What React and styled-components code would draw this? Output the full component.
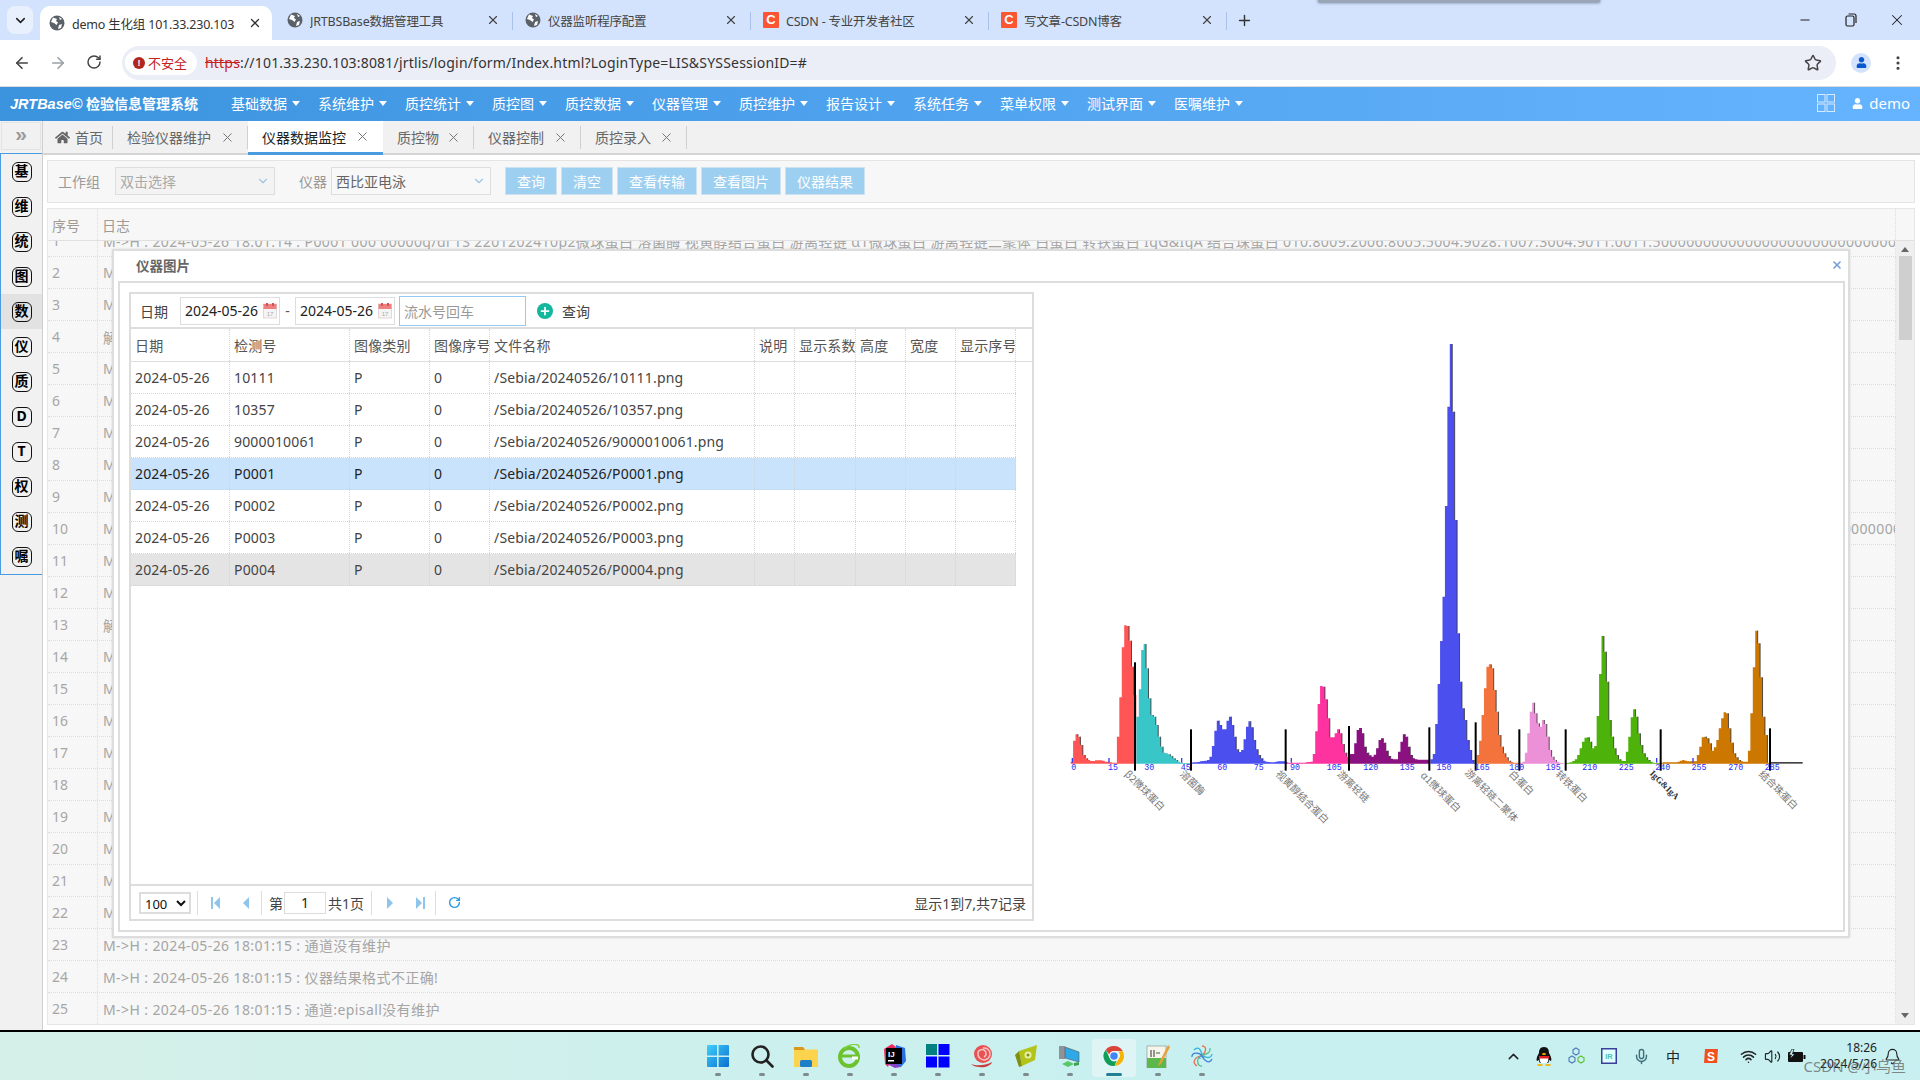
import React from "react";
import styled, { createGlobalStyle } from "styled-components";
import { ArrowLeft, ArrowRight, RotateCw, Star, X, Plus, Minus, ChevronDown, ChevronUp, Mic, Volume2, Wifi, Bell, MoreVertical } from "lucide-react";
import { FaHome, FaUser } from "react-icons/fa";

const Global = createGlobalStyle`
  html, body { margin: 0; padding: 0; background: #fff; }
  * { box-sizing: border-box; }
  body { font-family: "Noto Sans", "Noto Sans CJK SC", sans-serif; font-size: 14px; }
`;

const Page = styled.div`
  width: 1920px; height: 1080px; overflow: hidden; display: flex; flex-direction: column; position: relative;
  font-family: "Noto Sans", "Noto Sans CJK SC", sans-serif;
`;

/* ---------- browser chrome ---------- */
const TabStrip = styled.div`
  height: 40px; background: #d3e3fd; display: flex; align-items: flex-end; padding-left: 7px; position: relative; flex: none;
`;
const TabSearch = styled.div`
  width: 26px; height: 28px; margin: 0 7px 6px 0; border-radius: 8px; background: #e8f0fe; display: flex; align-items: center; justify-content: center; color: #222;
`;
const ActiveTab = styled.div`
  width: 232px; height: 34px; background: #fff; border-radius: 10px 10px 0 0; display: flex; align-items: center; padding: 0 10px 0 9px; margin-right: 3px; color: #333; position: relative;
`;
const BrowserTab = styled.div`
  width: 238px; height: 34px; display: flex; align-items: center; padding: 0 13px 6px 12px; color: #444; position: relative;
  &::after { content: ""; position: absolute; right: 0; top: 6px; height: 18px; width: 1px; background: #a9c2ea; }
`;
const TabTitle = styled.span`
  flex: 1; font-size: 12.5px; margin-left: 7px; white-space: nowrap; overflow: hidden; letter-spacing: -0.2px;
`;
const CsdnMark = styled.span`
  width: 16px; height: 16px; background: #fc5531; color: #fff; font: 700 13px/16px "Liberation Sans", sans-serif; text-align: center; flex: none; border-radius: 1px;
`;
const NewTab = styled.div`
  width: 34px; height: 28px; margin-bottom: 6px; display: flex; align-items: center; justify-content: center; color: #333;
`;
const WindowButtons = styled.div`
  margin-left: auto; display: flex; height: 40px; align-items: center; color: #222;
`;
const WindowButton = styled.div`
  width: 46px; display: flex; justify-content: center; align-items: center;
`;
const TopShade = styled.div`
  position: absolute; left: 1318px; top: -4px; width: 282px; height: 6px; background: #9aa5b5; box-shadow: 0 1px 3px rgba(60,70,90,.6);
`;
const AddressRow = styled.div`
  height: 47px; background: #fff; display: flex; align-items: center; padding: 0 0 1px 0; border-bottom: 1px solid #dcdcdc; flex: none;
`;
const NavIcon = styled.div`
  width: 36px; display: flex; justify-content: center; color: ${p => p.$dim ? "#9aa0a6" : "#444"};
`;
const NavIcons = styled.div`
  display: flex; padding-left: 4px; width: 122px;
`;
const Omnibox = styled.div`
  width: 1714px; height: 34px; border-radius: 17px; background: #ebeef7; display: flex; align-items: center; padding: 0 14px 0 3px;
`;
const SecurityChip = styled.div`
  width: 72px; height: 25px; background: #fff; border-radius: 13px; display: flex; align-items: center; gap: 3px; padding-left: 8px; color: #c5221f; font-size: 13px; white-space: nowrap;
`;
const SecurityDot = styled.span`
  width: 12px; height: 12px; border-radius: 50%; background: #b3261e; color: #fff; display: flex; align-items: center; justify-content: center; font: 700 9px/12px "Liberation Sans", sans-serif;
`;
const Url = styled.div`
  margin-left: 8px; font-size: 14px; color: #333; white-space: nowrap; letter-spacing: 0.19px; flex: 1;
`;
const Https = styled.span`
  color: #c5221f; text-decoration: line-through;
`;
const Avatar = styled.div`
  width: 20px; height: 20px; border-radius: 50%; background: #d3e3fd; display: flex; align-items: center; justify-content: center; color: #0b57d0; margin-left: 15px;
`;
const MenuDots = styled.div`
  width: 37px; margin-left: 8px; display: flex; justify-content: center; color: #444;
`;

/* ---------- app nav ---------- */
const Nav = styled.div`
  height: 34px; flex: none; display: flex; align-items: center; padding-bottom: 2px; color: #fff; background: linear-gradient(90deg, #3b93de, #66b4ff);
`;
const Logo = styled.div`
  width: 231px; padding-left: 10px; font-weight: 700; font-size: 14px; white-space: nowrap;
  i { font-family: "Liberation Sans", sans-serif; font-size: 14.5px; }
`;
const MenuItem = styled.div`
  width: ${p => p.$w}px; display: flex; align-items: center; font-size: 14px; white-space: nowrap;
  &::after { content: ""; margin-left: 5px; border: 4.5px solid transparent; border-top: 5px solid #fff; border-bottom: 0; }
`;
const NavRight = styled.div`
  margin-left: auto; display: flex; align-items: center; padding-right: 10px; font-size: 15px;
`;
const NavGap = styled.span`
  width: 17px;
`;
const Demo = styled.span`
  margin: 0 0 0 6px;
`;

/* ---------- body ---------- */
const Body = styled.div`
  flex: 1; display: flex; min-height: 0; background: #fff;
`;
const LeftCol = styled.div`
  width: 43px; flex: none; background: #f1f1f1; border-right: 1px solid #cfcfcf; display: flex; flex-direction: column;
`;
const Collapse = styled.div`
  height: 28px; margin: 1px 1px 0; border: 1px solid #e3e3e3; color: #9a9a9a; font: 700 21px/21px "Liberation Sans", sans-serif; text-align: center;
`;
const SideMenu = styled.div`
  margin-top: 3px; border: 1px solid #4a9be0; border-right: 0; height: 422px; padding-top: 0; width: 42px;
`;
const SideItem = styled.div`
  height: 35px; display: flex; align-items: center; justify-content: center; background: ${p => p.$active ? "#e2e2e2" : "transparent"};
`;
const SideBadge = styled.span`
  width: 20px; height: 20px; border: 1.5px solid #111; border-radius: 6px; color: #000; font-size: 14px; font-weight: 700; line-height: 16px; text-align: center; display: block;
`;
const Main = styled.div`
  flex: 1; min-width: 0; display: flex; flex-direction: column; position: relative;
`;
const PageTabs = styled.div`
  height: 34px; flex: none; display: flex; background: #f1f1f1; border-bottom: 2px solid #d5d5d5; color: #666; font-size: 14px;
`;
const PageTab = styled.div`
  display: flex; align-items: center; height: 34px; padding: 0 ${p => p.$close ? "0" : "10px"} ${p => p.$active ? 0 : 2}px ${p => p.$pl || 14}px; position: relative; width: ${p => p.$w}px; flex: none;
  color: ${p => p.$active ? "#222" : "#666"}; background: ${p => p.$active ? "#fff" : "transparent"};
  border-bottom: ${p => p.$active ? "3px solid #4a9be0" : "none"};
  &::after { content: ""; display: ${p => p.$active ? "none" : "block"}; position: absolute; right: 0; top: 5px; bottom: 6px; width: 1px; background: #d0d0d0; }
`;
const TabLabel = styled.span`
  flex: 1; white-space: nowrap;
`;
const TabClose = styled.span`
  width: 32px; padding-left: 4px; display: flex; justify-content: flex-start; color: #777;
`;
const HomeGlyph = styled.span`
  color: #666; display: flex; margin-right: 5px;
`;
const Content = styled.div`
  flex: 1; min-height: 0; display: flex; flex-direction: column; gap: 5px; padding: 5px 5px 5px 4px; background: #fff;
`;
const Filter = styled.div`
  height: 43px; flex: none; background: #f7f7f7; border: 1px solid #e4e4e4; display: flex; align-items: center; padding: 0 0 2px 10px; color: #999; font-size: 14px;
`;
const FilterLabel = styled.span`
  width: ${p => p.$w}px; white-space: nowrap;
`;
const SelectBox = styled.div`
  width: 160px; height: 28px; border: 1px solid #dedede; background: ${p => p.$on ? "#f8f8f8" : "#f3f3f3"}; color: ${p => p.$on ? "#666" : "#aaa"}; display: flex; align-items: center; justify-content: space-between; padding: 0 4px; font-size: 14px; margin-right: ${p => p.$mr || 0}px;
  svg { color: #9cc3e6; }
`;
const FilterButton = styled.div`
  width: ${p => p.$w}px; height: 28px; margin-right: 4px; background: #9dcff0; border: 1px solid #cfe2ef; color: #fff; font-size: 14px; display: flex; align-items: center; justify-content: center;
`;

/* ---------- log grid ---------- */
const LogTable = styled.div`
  flex: 1; min-height: 0; border: 1px solid #e6e6e6; background: #f7f7f7; display: flex; flex-direction: column; overflow: hidden; color: #a8a6a4;
`;
const LogHead = styled.div`
  height: 32px; flex: none; display: grid; grid-template-columns: 50px 1fr 18px; align-items: stretch; border-bottom: 1px solid #e0e0e0; background: #f7f7f7; position: relative; z-index: 1;
`;
const LogHeadCell = styled.div`
  display: flex; align-items: center; padding-left: 4px; color: #a29a95; border-right: 1px dotted #ddd;
`;
const LogFrame = styled.div`
  flex: 1; min-height: 0; display: flex;
`;
const LogRows = styled.div`
  flex: 1; min-width: 0; overflow: hidden;
`;
const LogRow = styled.div`
  height: 32px; display: grid; grid-template-columns: 50px 1fr; border-bottom: 1px dotted #ddd; border-right: 1px dotted #ddd; align-items: center; font-size: 14px; white-space: nowrap;
  &:first-child { margin-top: -16px; }
`;
const LogNum = styled.div`
  padding-left: 4px; height: 100%; display: flex; align-items: center; border-right: 1px dotted #ddd; font-size: 14px; color: #a8a6a4;
`;
const LogText = styled.div`
  padding-left: 5px; overflow: hidden; text-overflow: clip; color: #a5a5a5; letter-spacing: 0.4px;
`;
const Scroll = styled.div`
  width: 18px; flex: none; background: #efefef; display: flex; flex-direction: column; align-items: center; color: #666; padding-top: 6px;
`;
const ScrollArrow = styled.div`
  width: 0; height: 0; border: 4px solid transparent;
  ${p => p.$down ? "border-top: 5px solid #666; border-bottom: 0; margin-top: auto; margin-bottom: 6px;" : "border-bottom: 5px solid #666; border-top: 0;"}
`;
const ScrollThumb = styled.div`
  width: 13px; height: 84px; margin: 4px 0 0 1px; background: #cfcfcf;
`;

/* ---------- dialog ---------- */
const Dialog = styled.div`
  position: absolute; left: 69px; top: 128px; width: 1738px; height: 689px; background: #fff; border: 2px solid #ddd; border-right-width: 2px; display: flex; flex-direction: column; z-index: 5; box-shadow: 0 0 2px rgba(0,0,0,.12);
`;
const DialogHead = styled.div`
  height: 30px; flex: none; display: flex; align-items: center; justify-content: space-between; padding: 0 5px 3px 22px; font-weight: 700; color: #666; font-size: 13.5px;
  svg { color: #7ba3d8; }
`;
const DialogBody = styled.div`
  flex: 1; min-height: 0; margin: 0 3px 4px 4px; border: 2px solid #ddd; padding: 9px 10px 9px 9px; display: flex;
`;
const DataGrid = styled.div`
  width: 905px; flex: none; border: 2px solid #ddd; display: flex; flex-direction: column; color: #444;
`;
const GridTools = styled.div`
  height: 35px; flex: none; display: flex; align-items: center; padding-left: 9px; border-bottom: 2px solid #ddd; font-size: 14px;
`;
const ToolLabel = styled.span`
  width: 40px; color: #444;
`;
const DateBox = styled.div`
  width: 100px; height: 28px; border: 1px solid #ddd; display: flex; align-items: center; justify-content: space-between; padding: 0 2px 0 4px; color: #222; font-size: 14px;
`;
const DateDash = styled.span`
  width: 15px; text-align: center; color: #555;
`;
const SerialBox = styled.div`
  width: 127px; height: 30px; margin: 0 11px 0 4px; border: 1px solid #95c9ef; color: #999; display: flex; align-items: center; padding-left: 4px; font-size: 14px;
`;
const AddDot = styled.span`
  width: 16px; height: 16px; border-radius: 50%; background: #12b79c; margin-right: 9px; color: #fff; display: flex; align-items: center; justify-content: center;
`;
const Cols = "99px 120px 80px 60px 265px 40px 61px 50px 50px 60px";
const GridHead = styled.div`
  height: 33px; flex: none; display: grid; grid-template-columns: ${Cols}; border-bottom: 1px solid #ddd; color: #555;
`;
const GridRow = styled.div`
  height: 32px; flex: none; display: grid; grid-template-columns: ${Cols}; width: 885px; border-bottom: 1px dotted #d4d4d4;
  background: ${p => p.$state === "sel" ? "#c9e3fd" : p.$state === "last" ? "#e4e4e4" : "transparent"};
  color: ${p => p.$state === "sel" ? "#222" : "#444"};
`;
const Cell = styled.div`
  display: flex; align-items: center; padding-left: 4px; border-right: 1px dotted #d4d4d4; white-space: nowrap; overflow: hidden; font-size: 14px; letter-spacing: .17px;
`;
const GridFill = styled.div`
  flex: 1;
`;
const Pager = styled.div`
  height: 35px; flex: none; border-top: 2px solid #ddd; display: flex; align-items: center; padding: 0 6px 0 8px; color: #444; font-size: 14px;
`;
const PageSize = styled.select`
  width: 52px; height: 22px; border: 2px solid #ddd; background: #fff; color: #111; font: 13px "Noto Sans", sans-serif; padding: 0;
`;
const PagerSep = styled.span`
  width: 1px; height: 24px; background: #ddd; margin: 0 ${p => p.$r || 0}px 0 ${p => p.$l || 0}px;
`;
const PagerBtn = styled.span`
  width: 30px; display: flex; justify-content: center; color: #8fc5ea;
`;
const PageInput = styled.div`
  width: 42px; height: 22px; border: 1px solid #ddd; text-align: center; line-height: 20px; margin: 0 2px 0 1px; color: #222;
`;
const PagerInfo = styled.span`
  margin-left: auto; color: #444;
`;
const ChartWrap = styled.div`
  flex: 1; min-width: 0; padding: 28px 0 0 16px;
`;
const Chart = styled.svg`
  display: block; width: 770px; height: 560px;
`;

/* ---------- taskbar ---------- */
const Taskbar = styled.div`
  height: 50px; flex: none; border-top: 2px solid #000; background: linear-gradient(90deg, #d5f0e8, #c8f0f0 60%); display: grid; grid-template-columns: 1fr auto 1fr; position: relative;
`;
const TaskIcons = styled.div`
  display: flex; align-items: center; grid-column: 2;
`;
const TaskCell = styled.div`
  width: 44px; height: 38px; margin-top: 4px; display: flex; align-items: flex-start; justify-content: center; padding-top: 5px; position: relative; border-radius: 4px;
  background: ${p => p.$active ? "#dff4f4" : "transparent"};
  &::after { content: ""; position: absolute; bottom: 1px; left: 50%; transform: translateX(-50%); width: ${p => p.$active ? 16 : 6}px; height: 3px; border-radius: 2px; background: ${p => p.$active ? "#1f7f94" : "#7d8b8b"}; }
`;
const Tray = styled.div`
  grid-column: 3; display: flex; align-items: center; justify-content: flex-end; padding-right: 16px; color: #222;
`;
const TrayCell = styled.div`
  width: ${p => p.$w || 32}px; flex: none; display: flex; justify-content: center; align-items: center;
`;
const Clock = styled.div`
  width: 67px; flex: none; text-align: right; font-size: 12px; line-height: 16px; color: #222; margin-right: 3px; white-space: nowrap;
`;
const Watermark = styled.div`
  position: absolute; right: 14px; bottom: 4px; font-size: 15px; color: rgba(90,90,90,.7); white-space: nowrap;
`;

/* ---------- icons ---------- */
const GlobeIcon = () => (
  <svg width="16" height="16" viewBox="0 0 16 16" style={{ flex: "none" }}>
    <circle cx="8" cy="8" r="7.5" fill="#5b6168" />
    <path d="M4 2.5 8 4 7 6 9 7.5 7.5 10 5 8 2 7Z M10 10l3-1-1 4-3 1Z M10 2l3 2-2 1Z" fill="#fff" />
  </svg>
);
const Calendar = () => (
  <svg width="14" height="16" viewBox="0 0 14 16">
    <rect x=".5" y="1" width="13" height="14" fill="#f4f4f4" stroke="#e3d8d8" />
    <rect x=".5" y="1" width="13" height="5" fill="#f08080" />
    <rect x="3" y="0" width="2" height="3" fill="#c55" /><rect x="9" y="0" width="2" height="3" fill="#c55" />
    <text x="7" y="13" fontSize="6" fill="#aaa" textAnchor="middle" fontFamily="Liberation Sans">17</text>
  </svg>
);
const SkipIcon = ({ dir }) => (
  <svg width="10" height="14" viewBox="0 0 10 14" fill="currentColor" style={dir === "r" ? { transform: "scaleX(-1)" } : undefined}>
    <rect x="0" y="1" width="2" height="12" /><path d="M9 1v12L3 7Z" />
  </svg>
);
const StepIcon = ({ dir }) => (
  <svg width="8" height="14" viewBox="0 0 8 14" fill="currentColor" style={dir === "r" ? { transform: "scaleX(-1)" } : undefined}>
    <path d="M7 1v12L1 7Z" />
  </svg>
);
const GridGlyph = () => (
  <svg width="18" height="18" viewBox="0 0 18 18" fill="none" stroke="#d6eaff" strokeWidth="1">
    <rect x=".5" y=".5" width="7.5" height="7.5" /><rect x="10" y=".5" width="7.5" height="7.5" />
    <rect x=".5" y="10" width="7.5" height="7.5" /><rect x="10" y="10" width="7.5" height="7.5" />
  </svg>
);

const IconWin = () => (
  <svg width="24" height="24" viewBox="0 0 24 24">
    <defs><linearGradient id="w" x1="0" y1="0" x2="1" y2="1"><stop offset="0" stopColor="#3fd0fb" /><stop offset="1" stopColor="#0a6fd0" /></linearGradient></defs>
    <path d="M1 2a1 1 0 0 1 1-1h9v10.4H1ZM12.6 1H22a1 1 0 0 1 1 1v9.400H12.600ZM1 13h10v10H2a1 1 0 0 1-1-1ZM12.600 13H23v9a1 1 0 0 1-1 1h-9.400Z" fill="url(#w)" />
  </svg>
);
const IconSearch = () => (
  <svg width="24" height="24" viewBox="0 0 24 24" fill="none" stroke="#222" strokeWidth="2.600"><circle cx="10.500" cy="10.500" r="8" /><path d="m16.500 16.500 6 6" strokeLinecap="round" /></svg>
);
const IconFolder = () => (
  <svg width="24" height="24" viewBox="0 0 24 24">
    <path d="M0 3h9l2 2.500h13V23H0Z" fill="#fbd34d" /><path d="M0 3h9l2 3H0Z" fill="#d9981b" />
    <rect x="6" y="16" width="12" height="7" rx="1.500" fill="#1e7fc9" />
  </svg>
);
const IconEdge = () => (
  <svg width="24" height="24" viewBox="0 0 24 24" fill="none">
    <circle cx="11" cy="13" r="9" stroke="#6cc32e" strokeWidth="4" />
    <path d="M4 12h15" stroke="#6cc32e" strokeWidth="3" /><path d="M20 14h-6" stroke="#fff" strokeWidth="3" />
    <path d="M6 5C12-1 22-1 21 4" stroke="#7ed33c" strokeWidth="1.500" />
  </svg>
);
const IconIdea = () => (
  <svg width="24" height="24" viewBox="0 0 24 24">
    <path d="M2 5 10 0l4 3-8 20-3-3Z" fill="#ee2a5b" /><path d="M14 1l9 3 1 13-5 6-6-2Z" fill="#2c6ee0" /><path d="M5 20l8 4 6-1-8-5Z" fill="#8b3fc6" />
    <rect x="4" y="4" width="16" height="16" fill="#000" />
    <text x="6" y="13" fontSize="8" fill="#fff" fontWeight="700" fontFamily="Liberation Sans">IJ</text>
    <rect x="6" y="16" width="6" height="1.500" fill="#fff" />
  </svg>
);
const IconTiles = () => (
  <svg width="24" height="24" viewBox="0 0 24 24">
    <rect width="11" height="11" fill="#008080" /><rect x="12.500" width="11" height="11" fill="#0000ff" /><rect y="12.500" width="11" height="11" fill="#0000ff" /><rect x="12.500" y="12.500" width="11" height="11" fill="#0000ff" />
  </svg>
);
const IconSnail = () => (
  <svg width="24" height="24" viewBox="0 0 24 24" fill="none">
    <circle cx="13" cy="10" r="9" fill="#e85252" /><path d="M1 20c5 2 14 2 21-2-1 4-8 6-13 5-3 0-6-1-8-3Z" fill="#c93c3c" />
    <path d="M13 4a6 6 0 1 1-5 6 4 4 0 1 1 6 3" stroke="#f7c3c3" strokeWidth="1.500" />
  </svg>
);
const IconGreen = () => (
  <svg width="24" height="24" viewBox="0 0 24 24">
    <path d="M5 7 23 1l-2 15-13 6Z" fill="#b4c31a" /><path d="M1 11l4-4 3 15-3 1Z" fill="#7f8f12" />
    <circle cx="14" cy="11" r="3.500" fill="#e8efa8" /><circle cx="14" cy="11" r="1.500" fill="#7f8f12" />
  </svg>
);
const IconNet = () => (
  <svg width="24" height="24" viewBox="0 0 24 24">
    <path d="M1 2h6v13H1Z" fill="#8d939a" /><path d="M7 3l14 5v10L7 14Z" fill="#2fa8e8" stroke="#555" strokeWidth=".600" />
    <path d="M4 20l6-3 6 3-6 3Z" fill="#58c96a" /><path d="M16 19l5-1v3l-5 1Z" fill="#3aa14e" />
  </svg>
);
const IconChrome = () => (
  <svg width="24" height="24" viewBox="0 0 48 48">
    <path d="M24 4a20 20 0 0 1 17.300 10H24a10 10 0 0 0-9.600 7.200L7.600 11.400A20 20 0 0 1 24 4Z" fill="#db4437" />
    <path d="M41.300 14A20 20 0 0 1 25 44l8.700-15a10 10 0 0 0-1-13.600Z" fill="#f4b400" />
    <path d="M7.600 11.400 16.300 30.500A10 10 0 0 0 29 33.500L25 44A20 20 0 0 1 7.600 11.400Z" fill="#0f9d58" />
    <circle cx="24" cy="24" r="9.500" fill="#fff" /><circle cx="24" cy="24" r="7.500" fill="#4285f4" />
  </svg>
);
const IconNote = () => (
  <svg width="24" height="24" viewBox="0 0 24 24">
    <rect x="1" y="2" width="19" height="22" fill="#f5f5ea" stroke="#888" strokeWidth=".600" /><rect x="1" y="14" width="19" height="10" fill="#5cb84a" />
    <path d="M5 6v7M8 6v7" stroke="#333" /><path d="M10 9h4" stroke="#555" />
    <path d="M22 1 13 19l-1 3 3-2 9-17Z" fill="#e8a13a" />
  </svg>
);
const IconSwirl = () => (
  <svg width="24" height="24" viewBox="0 0 24 24" fill="none" strokeWidth="1.300">
    <path d="M12 2c6 0 4 8-2 10S2 19 7 22" stroke="#e87050" /><path d="M22 10c-1 6-9 3-10 0S9 1 4 6" stroke="#38b6d8" />
    <path d="M12 22c-5 1-6-8-1-10s10-3 9-8" stroke="#4fbf8f" /><path d="M2 13c-1-5 8-5 10-1s7 9 10 3" stroke="#3b82d8" />
    <text x="9" y="15" fontSize="6" fill="#3b82d8" fontStyle="italic" fontFamily="Liberation Serif">ev</text>
  </svg>
);
const IconQQ = () => (
  <svg width="16" height="19" viewBox="0 0 16 19">
    <path d="M8 0c4 0 5 3 5 6 2 3 3 7 2 8l-2-1c0 2-1 3-1 3H4s-1-1-1-3l-2 1C0 13 1 9 3 6c0-3 1-6 5-6Z" fill="#111" />
    <path d="M4 9c2 1 6 1 8 0 1 3 0 6-1 7H5c-1-1-2-4-1-7Z" fill="#fff" /><rect x="3" y="9" width="10" height="2.500" fill="#e02020" />
    <ellipse cx="8" cy="7" rx="2" ry="1" fill="#f5b400" /><ellipse cx="4" cy="18" rx="3" ry="1" fill="#f5b400" /><ellipse cx="12" cy="18" rx="3" ry="1" fill="#f5b400" />
  </svg>
);
const IconHex = () => (
  <svg width="18" height="18" viewBox="0 0 18 18" fill="none" strokeWidth="1.100">
    <path d="M8 1l3 1.700v3.500L8 8 5 6.200V2.700Z" stroke="#4a78b8" /><path d="M4 9l3 1.700v3.500L4 16l-3-1.800v-3.500Z" stroke="#4a78b8" /><path d="M13 9l3 1.700v3.500L13 16l-3-1.800v-3.500Z" stroke="#58c030" />
  </svg>
);
const IconIR = () => (
  <svg width="16" height="16" viewBox="0 0 16 16">
    <rect x=".75" y=".75" width="14.500" height="14.500" fill="#dff" stroke="#3a3f99" strokeWidth="1.500" />
    <text x="8" y="11" fontSize="7.500" fontWeight="700" fill="#4fbfb0" textAnchor="middle" fontFamily="Liberation Sans">IR</text>
  </svg>
);
const IconSogou = () => (
  <svg width="16" height="16" viewBox="0 0 16 16">
    <path d="M2 1h13l-1 14H1Z" fill="#f0521e" /><text x="8" y="12.500" fontSize="12" fontWeight="700" fill="#fff" textAnchor="middle" fontFamily="Liberation Sans">S</text>
  </svg>
);
const IconBattery = () => (
  <svg width="20" height="14" viewBox="0 0 20 14">
    <rect x="1" y="3" width="15" height="10" rx="1" fill="#111" /><rect x="16.500" y="6" width="2" height="4" fill="#111" />
    <path d="M5 0 2 6h2.500L3 10l5-5H5.500L7 0Z" fill="#c8f0f0" stroke="#111" strokeWidth=".700" />
  </svg>
);

/* ---------- chart data: one y value per 7.3-unit bar ---------- */
const BASE = 1331;
const STEP = 7.3;
const series = [
  { c: "#ff5555", x: 62, y: [1325,1262,1243,1250,1275,1305,1315,1320,1323,1323,1321,1321,1321,1322,1325,1325,1327,1328,1328,1250,1132,982,916,918,962,1040,1125] },
  { c: "#38c6c8", x: 259, y: [1190,1108,990,972,1045,1135,1185,1190,1215,1250,1280,1298,1300,1303,1308,1315,1320,1325,1328,1329,1329,1329] },
  { c: "#4b4fee", x: 420, y: [1328,1327,1327,1326,1324,1323,1322,1320,1310,1278,1232,1202,1215,1228,1228,1202,1190,1215,1250,1288,1296,1290,1258,1220,1204,1222,1260,1288,1305,1315,1322,1325,1326,1327,1327,1325,1324,1324,1324,1325] },
  { c: "#ff33a0", x: 708, y: [1328,1328,1328,1328,1328,1328,1328,1328,1327,1326,1325,1302,1234,1152,1098,1100,1138,1195,1252,1252,1240,1228,1240,1272,1298,1310] },
  { c: "#8b1080", x: 898, y: [1302,1302,1270,1230,1224,1240,1280,1298,1306,1310,1304,1285,1260,1255,1268,1292,1308,1316,1318,1318,1295,1265,1243,1250,1280,1305,1315,1318,1319,1319,1319,1319,1319] },
  { c: "#4b4fee", x: 1141, y: [1318,1302,1212,1092,963,830,558,260,72,275,600,940,1085,1165,1200,1260,1290,1320,1328] },
  { c: "#f4733c", x: 1280, y: [1305,1262,1185,1105,1040,1033,1045,1110,1175,1245,1280,1300,1312,1322,1326,1328,1328,1328] },
  { c: "#ec90d8", x: 1410, y: [1328,1325,1298,1240,1175,1148,1180,1210,1220,1200,1212,1250,1290,1310,1320,1325,1328,1329] },
  { c: "#4db30a", x: 1545, y: [1329,1328,1327,1323,1318,1305,1285,1265,1253,1252,1265,1285,1278,1188,1062,948,995,1085,1200,1250,1285,1305,1318,1322,1323,1295,1250,1192,1168,1190,1240,1275,1300,1312,1320,1325,1328,1329,1329,1329] },
  { c: "#cc7700", x: 1831, y: [1328,1327,1327,1327,1327,1327,1327,1325,1322,1320,1322,1324,1324,1324,1324,1305,1280,1252,1250,1255,1270,1292,1282,1260,1225,1195,1177,1180,1225,1268,1300,1312,1320,1324,1325,1325,1292,1180,1042,932,970,1072,1190,1245,1328] },
];
const areaPath = ({ x, y }) => {
  let d = `M${x} ${BASE}`;
  y.forEach((v, i) => { d += `L${(x + i * STEP).toFixed(1)} ${v}L${(x + (i + 1) * STEP).toFixed(1)} ${v}`; });
  return `${d}L${(x + y.length * STEP).toFixed(1)} ${BASE}Z`;
};
const dropPath = ({ x, y }) => {
  let d = "";
  y.forEach((v, i) => { if (i + 1 < y.length && y[i + 1] > v + 3) d += `M${(x + (i + 1) * STEP).toFixed(1)} ${v}V${y[i + 1]}`; });
  return d;
};
const markers = [[255,1027],[423,1228],[707,1228],[897,1218],[1138,1222],[1277,1207],[1408,1228],[1547,1228],[1832,1228],[2160,1225]];
const ticks = [[71,0],[189,15],[298,30],[407,45],[517,60],[626,75],[735,90],[853,105],[962,120],[1072,135],[1182,150],[1297,165],[1400,180],[1510,195],[1619,210],[1729,225],[1838,240],[1947,255],[2057,270],[2167,285]];
const tickMarks = [65,175,393,722,1818,1927];
const names = [[222,1364,"β2微球蛋白"],[388,1364,"溶菌酶"],[675,1364,"视黄醇结合蛋白"],[860,1364,"游离轻链"],[1110,1368,"α1微球蛋白"],[1243,1360,"游离轻链二聚体"],[1375,1364,"白蛋白"],[1515,1364,"转铁蛋白"],[2125,1364,"结合珠蛋白"]];

const ChartArt = () => (
  <Chart viewBox="0 0 2310 1680">
    {series.map((s, i) => <path key={i} d={areaPath(s)} fill={s.c} />)}
    {series.map((s, i) => <path key={i} d={dropPath(s)} stroke="#333" strokeWidth="2.500" fill="none" />)}
    <rect x="2160" y="1326" width="98" height="5" fill="#444" />
    {tickMarks.map(x => <rect key={x} x={x} y="1314" width="4" height="14" fill="#3a3af0" />)}
    {markers.map(([x, y]) => <rect key={x} x={x - 3} y={y} width="6" height={1352 - y} fill="#000" />)}
    {ticks.map(([x, n]) => <text key={n} x={x} y="1350" fontSize="25" fill="#2a2af5" textAnchor="middle" fontFamily="Liberation Mono, monospace">{n}</text>)}
    {names.map(([x, y, t]) => <text key={t} transform={`translate(${x} ${y}) rotate(45)`} fontSize="30" fill="#777" fontFamily="Noto Sans CJK SC, sans-serif">{t}</text>)}
    <text transform="translate(1798 1362) rotate(45)" fontSize="27" fontWeight="700" fill="#333" fontFamily="Liberation Serif, serif">IgG&amp;IgA</text>
  </Chart>
);

/* ---------- data ---------- */
const menus = [["基础数据",87],["系统维护",87],["质控统计",87],["质控图",73],["质控数据",87],["仪器管理",87],["质控维护",87],["报告设计",87],["系统任务",87],["菜单权限",87],["测试界面",87],["医嘱维护",87]];
const sideItems = ["基","维","统","图","数","仪","质","D","T","权","测","嘱"];
const pageTabs = [["检验仪器维护",135],["仪器数据监控",135,true],["质控物",91],["仪器控制",107],["质控录入",106]];
const heads = ["日期","检测号","图像类别","图像序号","文件名称","说明","显示系数","高度","宽度","显示序号"];
const rows = [
  ["10111","/Sebia/20240526/10111.png"],["10357","/Sebia/20240526/10357.png"],["9000010061","/Sebia/20240526/9000010061.png"],
  ["P0001","/Sebia/20240526/P0001.png","sel"],["P0002","/Sebia/20240526/P0002.png"],["P0003","/Sebia/20240526/P0003.png"],["P0004","/Sebia/20240526/P0004.png","last"],
];
const zeros = "0".repeat(60);
const longLine = "M->H : 2024-05-26 18:01:14 : P0001 000 00000g/dl TS 2201202410p2微球蛋白 溶菌酶 视黄醇结合蛋白 游离轻链 α1微球蛋白 游离轻链二聚体 白蛋白 转铁蛋白 IgG&IgA 结合珠蛋白 010.8009.2006.8005.5004.9028.1007.3004.9011.0011.5" + zeros;
const logs = Array.from({ length: 25 }, (_, i) => {
  const n = i + 1;
  if (n === 1) return longLine;
  if (n === 4 || n === 13) return "解";
  if (n === 10) return "M->H" + " " + "0".repeat(260);
  if (n === 23) return "M->H : 2024-05-26 18:01:15 : 通道没有维护";
  if (n === 24) return "M->H : 2024-05-26 18:01:15 : 仪器结果格式不正确!";
  if (n === 25) return "M->H : 2024-05-26 18:01:15 : 通道:episall没有维护";
  return "M->H";
});
const taskIcons = [IconWin, IconSearch, IconFolder, IconEdge, IconIdea, IconTiles, IconSnail, IconGreen, IconNet, IconChrome, IconNote, IconSwirl];

const tabsInfo = [["JRTBSBase数据管理工具", false], ["仪器监听程序配置", false], ["CSDN - 专业开发者社区", true], ["写文章-CSDN博客", true]];

export default function App() {
  return (
    <Page>
      <Global />
      <TabStrip>
        <TopShade />
        <TabSearch><ChevronDown size={15} strokeWidth={2.5} /></TabSearch>
        <ActiveTab>
          <GlobeIcon />
          <TabTitle>demo 生化组 101.33.230.103</TabTitle>
          <X size={14} strokeWidth={2.2} />
        </ActiveTab>
        {tabsInfo.map(([t, csdn]) => (
          <BrowserTab key={t}>
            {csdn ? <CsdnMark>C</CsdnMark> : <GlobeIcon />}
            <TabTitle>{t}</TabTitle>
            <X size={14} strokeWidth={2} />
          </BrowserTab>
        ))}
        <NewTab><Plus size={17} strokeWidth={2} /></NewTab>
        <WindowButtons>
          <WindowButton><Minus size={14} /></WindowButton>
          <WindowButton>
            <svg width="12" height="14" viewBox="0 0 12 14" fill="none" stroke="#222" strokeWidth="1.200"><rect x="1" y="3" width="8" height="10" rx="1.500" /><path d="M3.500 1H9a2 2 0 0 1 2 2v7" /></svg>
          </WindowButton>
          <WindowButton><X size={18} strokeWidth={1.4} /></WindowButton>
        </WindowButtons>
      </TabStrip>
      <AddressRow>
        <NavIcons>
          <NavIcon><ArrowLeft size={18} strokeWidth={2.2} /></NavIcon>
          <NavIcon $dim><ArrowRight size={18} strokeWidth={2.2} /></NavIcon>
          <NavIcon><RotateCw size={16} strokeWidth={2.2} /></NavIcon>
        </NavIcons>
        <Omnibox>
          <SecurityChip><SecurityDot>!</SecurityDot>不安全</SecurityChip>
          <Url><Https>https</Https>://101.33.230.103:8081/jrtlis/login/form/Index.html?LoginType=LIS&amp;SYSSessionID=#</Url>
          <Star size={18} strokeWidth={2} color="#444" />
        </Omnibox>
        <Avatar><FaUser size={11} /></Avatar>
        <MenuDots><MoreVertical size={18} strokeWidth={2.2} /></MenuDots>
      </AddressRow>
      <Nav>
        <Logo><i>JRTBase©</i> 检验信息管理系统</Logo>
        {menus.map(([m, w]) => <MenuItem key={m} $w={w}>{m}</MenuItem>)}
        <NavRight>
          <GridGlyph />
          <NavGap />
          <FaUser size={11} />
          <Demo>demo</Demo>
        </NavRight>
      </Nav>
      <Body>
        <LeftCol>
          <Collapse>»</Collapse>
          <SideMenu>
            {sideItems.map(s => <SideItem key={s} $active={s === "数"}><SideBadge>{s}</SideBadge></SideItem>)}
          </SideMenu>
        </LeftCol>
        <Main>
          <PageTabs>
            <PageTab $w={70} $pl={12}><HomeGlyph><FaHome size={15} /></HomeGlyph><TabLabel>首页</TabLabel></PageTab>
            {pageTabs.map(([t, w, active]) => (
              <PageTab key={t} $w={w} $close $active={active}>
                <TabLabel>{t}</TabLabel>
                <TabClose><X size={15} strokeWidth={1.6} /></TabClose>
              </PageTab>
            ))}
          </PageTabs>
          <Content>
            <Filter>
              <FilterLabel $w={57}>工作组</FilterLabel>
              <SelectBox $mr={24}>双击选择<ChevronDown size={14} /></SelectBox>
              <FilterLabel $w={32}>仪器</FilterLabel>
              <SelectBox $on $mr={14}>西比亚电泳<ChevronDown size={14} /></SelectBox>
              <FilterButton $w={52}>查询</FilterButton>
              <FilterButton $w={52}>清空</FilterButton>
              <FilterButton $w={80}>查看传输</FilterButton>
              <FilterButton $w={80}>查看图片</FilterButton>
              <FilterButton $w={80}>仪器结果</FilterButton>
            </Filter>
            <LogTable>
              <LogHead>
                <LogHeadCell>序号</LogHeadCell>
                <LogHeadCell>日志</LogHeadCell>
              </LogHead>
              <LogFrame>
                <LogRows>
                  {logs.map((t, i) => (
                    <LogRow key={i}>
                      <LogNum>{i + 1}</LogNum>
                      <LogText>{t}</LogText>
                    </LogRow>
                  ))}
                </LogRows>
                <Scroll>
                  <ScrollArrow />
                  <ScrollThumb />
                  <ScrollArrow $down />
                </Scroll>
              </LogFrame>
            </LogTable>
          </Content>
          <Dialog>
            <DialogHead>仪器图片<X size={12} strokeWidth={3.4} /></DialogHead>
            <DialogBody>
              <DataGrid>
                <GridTools>
                  <ToolLabel>日期</ToolLabel>
                  <DateBox>2024-05-26<Calendar /></DateBox>
                  <DateDash>-</DateDash>
                  <DateBox>2024-05-26<Calendar /></DateBox>
                  <SerialBox>流水号回车</SerialBox>
                  <AddDot><Plus size={12} strokeWidth={3.5} /></AddDot>
                  查询
                </GridTools>
                <GridHead>
                  {heads.map(h => <Cell key={h}>{h}</Cell>)}
                </GridHead>
                {rows.map(([id, path, state]) => (
                  <GridRow key={id} $state={state}>
                    <Cell>2024-05-26</Cell><Cell>{id}</Cell><Cell>P</Cell><Cell>0</Cell><Cell>{path}</Cell>
                    <Cell /><Cell /><Cell /><Cell /><Cell />
                  </GridRow>
                ))}
                <GridFill />
                <Pager>
                  <PageSize defaultValue="100"><option value="100">100</option></PageSize>
                  <PagerSep $l={6} $r={3} />
                  <PagerBtn><SkipIcon /></PagerBtn>
                  <PagerBtn><StepIcon /></PagerBtn>
                  <PagerSep $r={7} />
                  第
                  <PageInput>1</PageInput>
                  共1页
                  <PagerSep $l={7} $r={3} />
                  <PagerBtn><StepIcon dir="r" /></PagerBtn>
                  <PagerBtn><SkipIcon dir="r" /></PagerBtn>
                  <PagerSep $l={0} $r={3} />
                  <PagerBtn><RotateCw size={13} strokeWidth={2.6} color="#2b9be0" /></PagerBtn>
                  <PagerInfo>显示1到7,共7记录</PagerInfo>
                </Pager>
              </DataGrid>
              <ChartWrap><ChartArt /></ChartWrap>
            </DialogBody>
          </Dialog>
        </Main>
      </Body>
      <Taskbar>
        <TaskIcons>
          {taskIcons.map((I, i) => <TaskCell key={i} $active={I === IconChrome}><I /></TaskCell>)}
        </TaskIcons>
        <Tray>
          <TrayCell $w={34}><ChevronUp size={17} strokeWidth={2} /></TrayCell>
          <TrayCell $w={28}><IconQQ /></TrayCell>
          <TrayCell $w={38}><IconHex /></TrayCell>
          <TrayCell $w={26}><IconIR /></TrayCell>
          <TrayCell $w={38}><Mic size={17} color="#3f6f7a" /></TrayCell>
          <TrayCell $w={26}>中</TrayCell>
          <TrayCell $w={50}><IconSogou /></TrayCell>
          <TrayCell $w={24}><Wifi size={17} strokeWidth={2.2} /></TrayCell>
          <TrayCell $w={24}><Volume2 size={17} strokeWidth={1.6} /></TrayCell>
          <TrayCell $w={26}><IconBattery /></TrayCell>
          <Clock>18:26<br />2024/5/26</Clock>
          <TrayCell $w={24}><Bell size={17} strokeWidth={1.6} /></TrayCell>
        </Tray>
        <Watermark>CSDN @小乌鱼</Watermark>
      </Taskbar>
    </Page>
  );
}
